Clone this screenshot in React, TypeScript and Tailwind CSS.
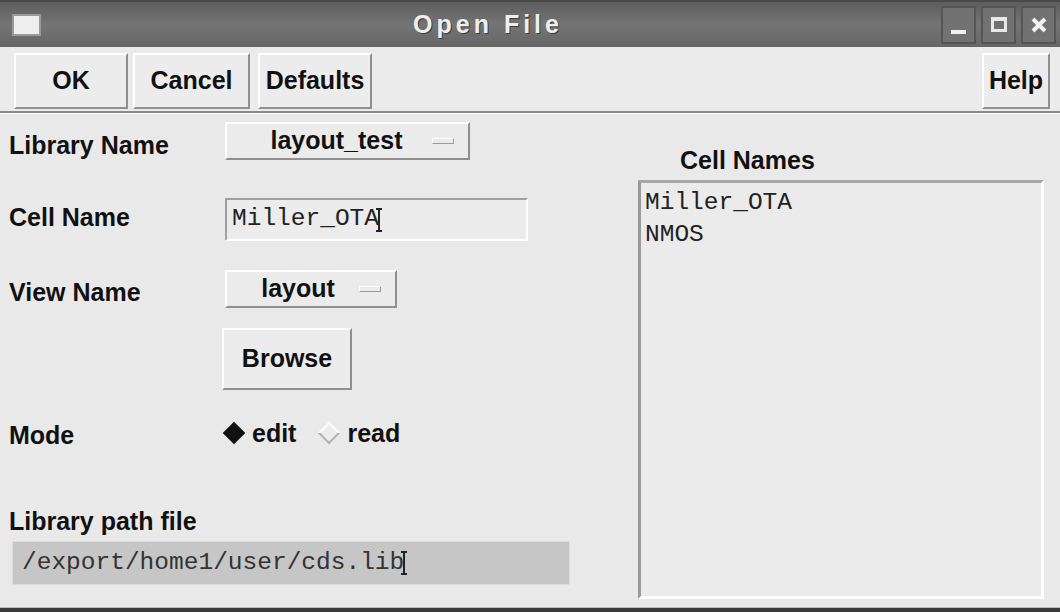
import React from 'react'

const sans = { fontFamily: '"Liberation Sans", Arial, sans-serif' }
const mono = { fontFamily: '"Liberation Mono", "Courier New", monospace' }

function RaisedButton({ label, className = '' }: { label: string; className?: string }) {
  return (
    <div
      className={`flex items-center justify-center bg-[#ececec] border-2 border-t-white border-l-white border-b-[#8f8f8f] border-r-[#8f8f8f] text-[25px] font-bold text-[#111] ${className}`}
    >
      {label}
    </div>
  )
}

function OptionMenu({ value, className = '' }: { value: string; className?: string }) {
  return (
    <div
      className={`flex items-center bg-[#ebebeb] border-2 border-t-white border-l-white border-b-[#8f8f8f] border-r-[#8f8f8f] text-[25px] font-bold text-[#111] ${className}`}
    >
      <span className="flex-1 text-center">{value}</span>
      <span className="mr-[14px] w-[22px] h-[6px] border border-t-white border-l-white border-b-[#9a9a9a] border-r-[#9a9a9a]" />
    </div>
  )
}

function Cursor() {
  return (
    <span className="inline-flex flex-col items-center align-middle -ml-[3px]">
      <span className="w-[6px] h-[2px] bg-[#222]" />
      <span className="w-[2px] h-[20px] bg-[#222]" />
      <span className="w-[6px] h-[2px] bg-[#222]" />
    </span>
  )
}

function TitleBar() {
  return (
    <div className="h-[47px] flex items-center bg-gradient-to-b from-[#5e5e5e] via-[#747474] to-[#666666] border-t-2 border-[#4a4a4a]">
      <div className="ml-[12px] w-[29px] h-[22px] bg-[#eeeeee] border-2 border-[#9a9a9a]" />
      <div className="flex-1 flex justify-center pr-[6px]">
        <span className="text-[25px] font-bold tracking-[4px] text-[#eeeeee] [text-shadow:1px_1px_0_#3a3a3a]">
          Open File
        </span>
      </div>
      <div className="flex gap-[5px] mr-[4px]">
        <div className="w-[35px] h-[38px] bg-[#727272] border-2 border-[#555] flex items-end justify-center pb-[8px]">
          <span className="w-[15px] h-[4px] bg-[#f2f2f2]" />
        </div>
        <div className="w-[35px] h-[38px] bg-[#727272] border-2 border-[#555] flex items-center justify-center">
          <span className="w-[16px] h-[15px] border-[3px] border-t-[4px] border-[#e8e8e8]" />
        </div>
        <div className="w-[35px] h-[38px] bg-[#727272] border-2 border-[#555] flex items-center justify-center">
          <svg width="18" height="18" viewBox="0 0 18 18">
            <path d="M3 3 L15 15 M15 3 L3 15" stroke="#f2f2f2" strokeWidth="4" />
          </svg>
        </div>
      </div>
    </div>
  )
}

export default function App() {
  return (
    <div className="w-[1060px] h-[612px] bg-[#e9e9e9] flex flex-col overflow-hidden" style={sans}>
      <TitleBar />

      {/* Button bar */}
      <div className="h-[66px] flex items-start pt-[6px] pl-[14px] pr-[10px] border-b-2 border-[#8a8a8a] bg-[#ebebeb]">
        <RaisedButton label="OK" className="w-[114px] h-[56px]" />
        <RaisedButton label="Cancel" className="ml-[5px] w-[117px] h-[56px]" />
        <RaisedButton label="Defaults" className="ml-[8px] w-[114px] h-[56px]" />
        <div className="flex-1" />
        <RaisedButton label="Help" className="w-[68px] h-[56px]" />
      </div>

      {/* Body */}
      <div className="flex-1 flex border-t border-white">
        <div className="w-[628px] pl-[9px] flex flex-col">
          <div className="mt-[8px] h-[38px] flex items-center">
            <span className="w-[216px] pt-[8px] text-[25px] leading-none font-bold text-[#111]">Library Name</span>
            <OptionMenu value="layout_test" className="w-[245px] h-[38px] pl-[14px]" />
          </div>

          <div className="mt-[38px] h-[43px] flex items-center">
            <span className="w-[216px] pb-[4px] text-[25px] leading-none font-bold text-[#111]">Cell Name</span>
            <div className="w-[303px] h-[43px] flex items-center pl-[5px] border-2 border-t-[#a0a0a0] border-l-[#a0a0a0] border-b-white border-r-white bg-[#ececec] text-[24.5px] leading-none text-[#222]" style={mono}>
              Miller_OTA
              <Cursor />
            </div>
          </div>

          <div className="mt-[29px] h-[38px] flex items-center">
            <span className="w-[216px] pt-[6px] text-[25px] leading-none font-bold text-[#111]">View Name</span>
            <OptionMenu value="layout" className="w-[172px] h-[38px] pl-[10px]" />
          </div>

          <div className="mt-[20px] pl-[213px]">
            <RaisedButton label="Browse" className="w-[130px] h-[62px]" />
          </div>

          <div className="mt-[28px] h-[30px] flex items-center">
            <span className="w-[213px] pt-[4px] text-[25px] leading-none font-bold text-[#111]">Mode</span>
            <span className="ml-[4px] w-[16px] h-[16px] rotate-45 bg-[#111]" />
            <span className="ml-[10px] text-[25px] leading-none font-bold text-[#111]">edit</span>
            <span className="ml-[25px] w-[16px] h-[16px] rotate-45 bg-[#ececec] border-2 border-t-white border-l-white border-b-[#b0b0b0] border-r-[#b0b0b0]" />
            <span className="ml-[10px] text-[25px] leading-none font-bold text-[#111]">read</span>
          </div>

          <div className="mt-[58px] h-[30px] flex items-center text-[25px] leading-none font-bold text-[#111]">Library path file</div>
          <div className="mt-[5px] ml-[3px] w-[558px] h-[44px] flex items-center pl-[9px] bg-[#c6c6c6] border border-[#dddddd] text-[24.5px] leading-none text-[#333]" style={mono}>
            /export/home1/user/cds.lib
            <Cursor />
          </div>
        </div>

        <div className="flex-1 flex flex-col pr-[16px] pl-[10px]">
          <div className="mt-[31px] pl-[42px] h-[30px] flex items-center text-[25px] leading-none font-bold text-[#111]">Cell Names</div>
          <div className="mt-[5px] h-[419px] border-[3px] border-t-[#a8a8a8] border-l-[#999999] border-b-white border-r-white bg-[#ebebeb] pl-[4px] pt-[4px] text-[24.5px] leading-[32px] text-[#222]" style={mono}>
            <div>Miller_OTA</div>
            <div>NMOS</div>
          </div>
        </div>
      </div>

      <div className="h-[5px] bg-[#3a3a3a] border-t border-[#bdbdbd]" />
    </div>
  )
}
